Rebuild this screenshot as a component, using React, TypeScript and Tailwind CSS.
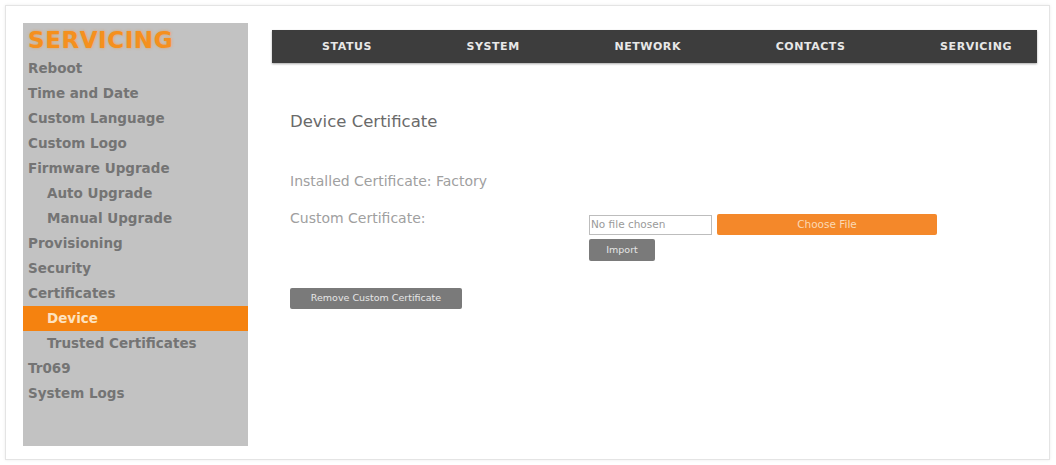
import React from "react";

const menu: { label: string; sub?: boolean; active?: boolean }[] = [
  { label: "Reboot" },
  { label: "Time and Date" },
  { label: "Custom Language" },
  { label: "Custom Logo" },
  { label: "Firmware Upgrade" },
  { label: "Auto Upgrade", sub: true },
  { label: "Manual Upgrade", sub: true },
  { label: "Provisioning" },
  { label: "Security" },
  { label: "Certificates" },
  { label: "Device", sub: true, active: true },
  { label: "Trusted Certificates", sub: true },
  { label: "Tr069" },
  { label: "System Logs" },
];

const tabs = ["STATUS", "SYSTEM", "NETWORK", "CONTACTS", "SERVICING"];

export default function App() {
  return (
    <div className="h-[465px] w-[1056px] bg-white p-[5px] font-['DejaVu_Sans',sans-serif]">
      <div className="flex h-[455px] w-[1045px] gap-6 border border-[#e4e4e4] pl-[17px] pt-[17px] shadow-[0_0_3px_rgba(0,0,0,0.08)]">
        <aside className="h-[423px] w-[225px] shrink-0 bg-[#c2c2c2]">
          <div className="pl-[5px] pt-[2px] text-[23px] font-bold leading-[30px] tracking-wide text-[#f5901e] [text-shadow:0_0_3px_rgba(245,140,30,0.6)]">
            SERVICING
          </div>
          <ul className="mt-[1px]">
            {menu.map((m) => (
              <li
                key={m.label}
                className={
                  "h-[25px] text-[13.5px] font-bold leading-[25px] " +
                  (m.sub ? "pl-[24px] " : "pl-[5px] ") +
                  (m.active ? "bg-[#f5820f] text-[#fde2c0]" : "text-[#747474]")
                }
              >
                {m.label}
              </li>
            ))}
          </ul>
        </aside>

        <main className="flex-1 pt-[7px]">
          <nav className="flex h-[33px] w-[765px] items-center justify-between bg-[#3d3d3d] pl-[50px] pr-[25px] pt-[2px] text-[11px] font-bold tracking-wider text-[#e8e8e8] shadow-[0_1px_2px_rgba(0,0,0,0.35)]">
            {tabs.map((t) => (
              <span key={t}>{t}</span>
            ))}
          </nav>

          <section className="pl-[18px]">
            <h1 className="mt-[49px] text-[16.5px] leading-[20px] text-[#6a6a6a]">Device Certificate</h1>
            <p className="mt-[40px] text-[14px] leading-[18px] text-[#a0a0a0]">Installed Certificate: Factory</p>

            <div className="mt-[19px] flex">
              <p className="w-[299px] text-[14px] leading-[18px] text-[#a0a0a0]">Custom Certificate:</p>
              <div className="pt-[5px]">
                <div className="flex items-end gap-[5px]">
                  <div className="flex h-[20px] w-[123px] items-center border border-[#bdbdbd] pl-[1px] text-[10.5px] text-[#9a9a9a]">
                    No file chosen
                  </div>
                  <button className="h-[21px] w-[220px] rounded-[2px] bg-[#f4882a] text-[10.5px] text-[#fbd9b4]">
                    Choose File
                  </button>
                </div>
                <button className="mt-[4px] h-[22px] w-[66px] rounded-[2px] bg-[#7a7a7a] text-[9.5px] text-[#e6e6e6]">
                  Import
                </button>
              </div>
            </div>

            <button className="mt-[27px] h-[21px] w-[172px] rounded-[2px] bg-[#7a7a7a] text-[9.5px] text-[#e6e6e6]">
              Remove Custom Certificate
            </button>
          </section>
        </main>
      </div>
    </div>
  );
}
